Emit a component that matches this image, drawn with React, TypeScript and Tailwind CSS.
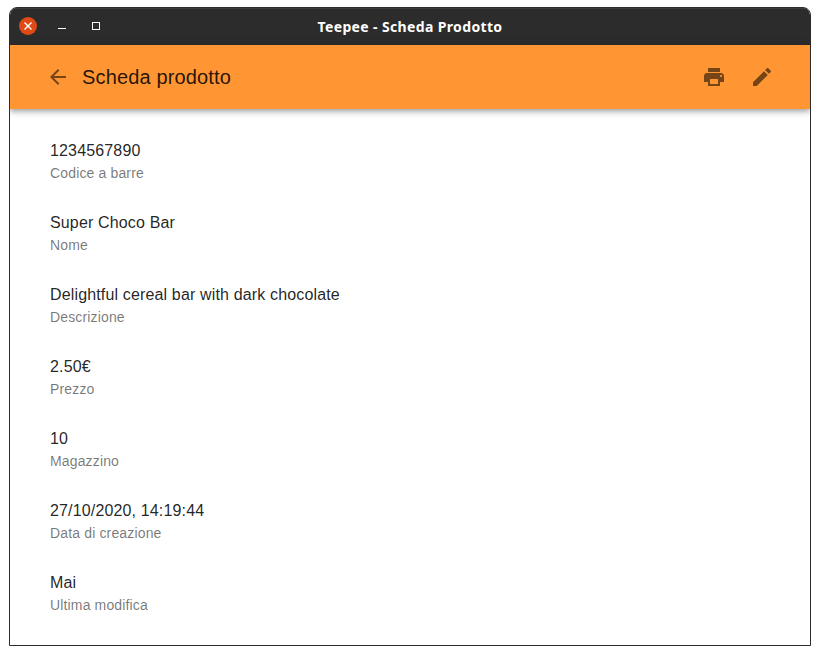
import React from "react";

const fields = [
  { value: "1234567890", label: "Codice a barre" },
  { value: "Super Choco Bar", label: "Nome" },
  { value: "Delightful cereal bar with dark chocolate", label: "Descrizione" },
  { value: "2.50€", label: "Prezzo" },
  { value: "10", label: "Magazzino" },
  { value: "27/10/2020, 14:19:44", label: "Data di creazione" },
  { value: "Mai", label: "Ultima modifica" },
];

function Icon({ path }: { path: string }) {
  return (
    <svg viewBox="0 0 24 24" className="size-6 shrink-0 fill-black/54">
      <path d={path} />
    </svg>
  );
}

function TitleBar() {
  return (
    <header className="grid h-[37px] grid-cols-[1fr_auto_1fr] items-center border-t border-[#3d3d3d] bg-[#2c2c2c]">
      <div className="flex items-center pb-[2px] pl-[9px]">
        <button aria-label="Chiudi" className="flex size-[18px] items-center justify-center rounded-full bg-[#df4a16]">
          <svg viewBox="0 0 8 8" className="size-2" fill="none" stroke="#fff" strokeWidth="1.4">
            <path d="M.5.5l7 7M7.5.5l-7 7" />
          </svg>
        </button>
        <button aria-label="Riduci" className="mt-[5px] ml-[21px] h-px w-2 bg-white" />
        <button aria-label="Ingrandisci" className="ml-[26px] size-2 border border-white" />
      </div>
      <h1 className="w-[186px] text-center font-['Noto_Sans',sans-serif] text-[14px] leading-5 font-bold tracking-[0.36px] whitespace-nowrap text-white">
        Teepee - Scheda Prodotto
      </h1>
    </header>
  );
}

function AppBar() {
  return (
    <div className="z-10 flex h-16 shrink-0 items-center bg-[#ff9533] pr-9 pl-9 shadow-[0_2px_4px_-1px_rgba(0,0,0,0.2),0_4px_5px_0_rgba(0,0,0,0.14),0_1px_10px_0_rgba(0,0,0,0.12)]">
      <button aria-label="Indietro">
        <Icon path="M20 11H7.83l5.59-5.59L12 4l-8 8 8 8 1.41-1.41L7.83 13H20v-2z" />
      </button>
      <h2 className="ml-3 grow text-[20px] leading-8 tracking-[0.0075em] text-black/87">Scheda prodotto</h2>
      <div className="flex gap-6">
        <button aria-label="Stampa">
          <Icon path="M19 8H5c-1.66 0-3 1.34-3 3v6h4v4h12v-4h4v-6c0-1.66-1.34-3-3-3zm-3 11H8v-5h8v5zm3-7c-.55 0-1-.45-1-1s.45-1 1-1 1 .45 1 1-.45 1-1 1zm-1-9H6v4h12V3z" />
        </button>
        <button aria-label="Modifica">
          <Icon path="M3 17.25V21h3.75L17.81 9.94l-3.75-3.75L3 17.25zM20.71 7.04c.39-.39.39-1.02 0-1.41l-2.34-2.34c-.39-.39-1.02-.39-1.41 0l-1.83 1.83 3.75 3.75 1.83-1.83z" />
        </button>
      </div>
    </div>
  );
}

export default function App() {
  return (
    <div className="h-[655px] w-[820px] bg-white px-[9px] pt-[7px] pb-[9px] font-['Liberation_Sans',Arial,sans-serif]">
      <div className="flex h-full flex-col overflow-hidden rounded-t-lg border border-[#2c2c2c] bg-white">
        <TitleBar />
        <AppBar />
        <dl className="flex flex-col px-10 pt-4">
          {fields.map((f) => (
            <div key={f.label} className="flex h-[72px] flex-col justify-center">
              <dt className="text-[16px] leading-6 tracking-[0.00938em] text-black/87">{f.value}</dt>
              <dd className="text-[14px] leading-5 tracking-[0.01071em] text-black/54">{f.label}</dd>
            </div>
          ))}
        </dl>
      </div>
    </div>
  );
}
